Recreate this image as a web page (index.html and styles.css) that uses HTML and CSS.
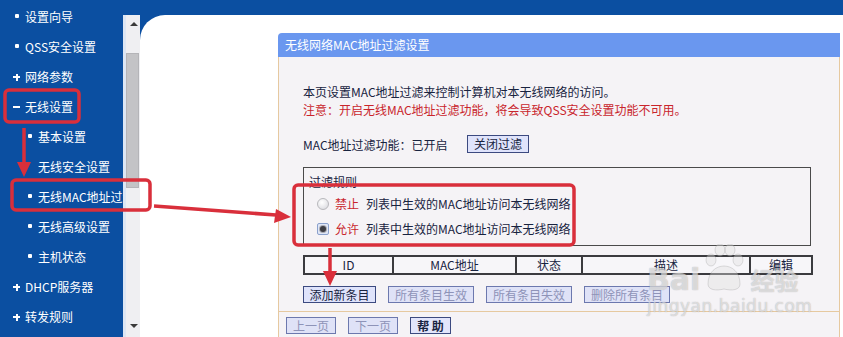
FILE: index.html
```html
<!DOCTYPE html>
<html lang="zh-CN">
<head>
<meta charset="utf-8">
<title>无线网络MAC地址过滤设置</title>
<link rel="stylesheet" href="styles.css">
</head>
<body>
<div class="frame">
  <nav class="sidebar">
    <div class="nav-item"><span class="b-dot"></span>设置向导</div>
    <div class="nav-item"><span class="b-dot"></span>QSS安全设置</div>
    <div class="nav-item"><span class="b-plus"></span>网络参数</div>
    <div class="nav-item"><span class="b-minus"></span>无线设置</div>
    <div class="nav-item sub"><span class="b-dot"></span>基本设置</div>
    <div class="nav-item sub"><span class="b-none"></span>无线安全设置</div>
    <div class="nav-item sub"><span class="b-dot"></span>无线MAC地址过滤</div>
    <div class="nav-item sub"><span class="b-dot"></span>无线高级设置</div>
    <div class="nav-item sub"><span class="b-dot"></span>主机状态</div>
    <div class="nav-item"><span class="b-plus"></span>DHCP服务器</div>
    <div class="nav-item"><span class="b-plus"></span>转发规则</div>
  </nav>
  <div class="scroll-col">
    <div class="scroll-track">
      <div class="arrow-up"></div>
      <div class="thumb"></div>
      <div class="arrow-down"></div>
    </div>
  </div>
  <main class="main">
    <div class="canvas">
      <section class="panel">
        <div class="panel-head">无线网络MAC地址过滤设置</div>
        <div class="panel-body">
          <p class="line">本页设置MAC地址过滤来控制计算机对本无线网络的访问。</p>
          <p class="line warn">注意：开启无线MAC地址过滤功能，将会导致QSS安全设置功能不可用。</p>
          <div class="status-row">
            <span class="status-text">MAC地址过滤功能：已开启</span>
            <button class="btn btn-on">关闭过滤</button>
          </div>
          <div class="rules">
            <div class="rules-title">过滤规则</div>
            <label class="radio-row"><span class="radio"></span><span class="red">禁止</span>列表中生效的MAC地址访问本无线网络</label>
            <label class="radio-row"><span class="radio checked"></span><span class="red">允许</span>列表中生效的MAC地址访问本无线网络</label>
          </div>
          <table class="list">
            <tr>
              <th class="c-id">ID</th>
              <th class="c-mac">MAC地址</th>
              <th class="c-st">状态</th>
              <th class="c-desc">描述</th>
              <th class="c-edit">编辑</th>
            </tr>
          </table>
          <div class="btn-row">
            <button class="btn btn-on">添加新条目</button>
            <button class="btn btn-off">所有条目生效</button>
            <button class="btn btn-off">所有条目失效</button>
            <button class="btn btn-off">删除所有条目</button>
          </div>
        </div>
        <div class="panel-foot">
          <button class="btn btn-off">上一页</button>
          <button class="btn btn-off">下一页</button>
          <button class="btn btn-help">帮 助</button>
        </div>
      </section>
    </div>
  </main>
</div>

<div class="watermark">
  <div class="wm-top">
    <span class="wm-bai">Bai</span>
    <svg class="wm-paw" width="44" height="50" viewBox="0 0 44 50">
      <ellipse cx="9" cy="16" rx="5" ry="6"/>
      <ellipse cx="18" cy="6" rx="5" ry="6"/>
      <ellipse cx="28" cy="6" rx="5" ry="6"/>
      <ellipse cx="36" cy="16" rx="5" ry="6"/>
      <path d="M6 40 C6 28 14 22 22 22 C30 22 38 28 38 40 C38 46 30 47 22 45 C14 47 6 46 6 40 Z"/>
    </svg>
    <span class="wm-jy">经验</span>
  </div>
  <div class="wm-url">jingyan.baidu.com</div>
</div>

<svg class="marks" width="843" height="337" viewBox="0 0 843 337">
  <g fill="none" stroke="#d92f3b" stroke-width="3.5">
    <rect x="5" y="90" width="74" height="32" rx="4"/>
    <rect x="12" y="180" width="138" height="30" rx="4"/>
    <rect x="294" y="185" width="280" height="60" rx="4"/>
    <line x1="24" y1="128" x2="24" y2="164"/>
    <line x1="154" y1="206" x2="276" y2="215"/>
    <line x1="330" y1="248" x2="330" y2="273"/>
  </g>
  <g fill="#d92f3b">
    <polygon points="24,177 17,162 31,162"/>
    <polygon points="291,217 274,223 276,209"/>
    <polygon points="330,286 323,271 337,271"/>
  </g>
</svg>
</body>
</html>
```

FILE: styles.css
```css
* { box-sizing: border-box; }

html, body {
  margin: 0;
  padding: 0;
}

body {
  width: 843px;
  height: 337px;
  overflow: hidden;
  position: relative;
  background: #ffffff;
  font-family: "Noto Sans CJK SC", "DejaVu Sans", sans-serif;
  font-size: 12px;
  color: #18233f;
}

.frame {
  display: flex;
  height: 337px;
}

/* ---------- sidebar ---------- */
.sidebar {
  width: 123px;
  flex: none;
  background: #0b4fa1;
  color: #ffffff;
  padding-top: 2px;
  overflow: hidden;
  white-space: nowrap;
}

.nav-item {
  display: flex;
  align-items: center;
  height: 30px;
  padding-left: 13px;
  font-size: 12px;
  line-height: 1;
}

.nav-item.sub {
  padding-left: 26px;
}

.nav-item > span {
  width: 8px;
  height: 8px;
  margin-right: 4px;
  flex: none;
  position: relative;
}

.b-dot::after {
  content: "";
  position: absolute;
  left: 2px;
  top: 1px;
  width: 4px;
  height: 4px;
  background: #ffffff;
  border-radius: 1px;
}

.b-plus::before,
.b-plus::after,
.b-minus::before {
  content: "";
  position: absolute;
  background: #ffffff;
}

.b-plus::before,
.b-minus::before {
  left: 0;
  top: 3px;
  width: 7px;
  height: 2px;
}

.b-plus::after {
  left: 2.5px;
  top: 0.5px;
  width: 2px;
  height: 7px;
}

/* ---------- scrollbar ---------- */
.scroll-col {
  width: 17px;
  flex: none;
  background: #0b4fa1;
  padding-top: 15px;
}

.scroll-track {
  height: 322px;
  background: #efeff2;
  border-left: 3px solid #dde6f4;
  position: relative;
}

.arrow-up {
  position: absolute;
  left: 4px;
  top: 7px;
  width: 0;
  height: 0;
  border-left: 4px solid transparent;
  border-right: 4px solid transparent;
  border-bottom: 4px solid #3a3a3a;
}

.thumb {
  position: absolute;
  left: 0;
  top: 38px;
  width: 13px;
  height: 135px;
  background: #c3c3c6;
  border: 1px solid #b4b4b8;
}

.arrow-down {
  position: absolute;
  left: 4px;
  top: 309px;
  width: 0;
  height: 0;
  border-left: 4px solid transparent;
  border-right: 4px solid transparent;
  border-top: 4px solid #3a3a3a;
}

/* ---------- main ---------- */
.main {
  flex: 1;
  background: #0b4fa1;
  padding-top: 15px;
}

.canvas {
  background: #ffffff;
  height: 322px;
  border-top-left-radius: 25px;
  padding: 18px 0 0 138px;
  overflow: hidden;
}

.panel {
  width: 562px;
}

.panel-head {
  height: 24px;
  line-height: 24px;
  background: #6a97ef;
  color: #ffffff;
  padding-left: 7px;
  font-size: 12px;
  border-top-left-radius: 4px;
}

.panel-body {
  background: #f5f3f6;
  border-left: 1px solid #e6c9a0;
  border-right: 1px solid #e6c9a0;
  padding: 26px 0 8px 24px;
}

.line {
  margin: 0;
  height: 18px;
  line-height: 18px;
  white-space: nowrap;
}

.warn {
  color: #c9252c;
}

.status-row {
  display: flex;
  align-items: center;
  margin-top: 16px;
  height: 18px;
}

.status-text {
  width: 164px;
}

.btn {
  font-family: "Noto Sans CJK SC", "DejaVu Sans", sans-serif;
  font-size: 12px;
  line-height: 1;
  padding: 0 4px;
  height: 17px;
  border-radius: 0;
  cursor: default;
}

.btn-on {
  background: #dfe3fb;
  color: #18233f;
  border: 1px solid #3c4a80;
}

.status-row .btn {
  height: 18px;
  width: 62px;
}

.btn-off {
  background: #dfe2f7;
  color: #8e93b8;
  border: 1px solid #6c78ae;
}

.btn-help {
  background: #e2e5fb;
  color: #18233f;
  border: 1px solid #3c4a80;
  font-weight: bold;
}

/* ---------- rules box ---------- */
.rules {
  margin-top: 14px;
  width: 508px;
  border: 1px solid #4a4a4a;
  padding: 5px 0 4px 5px;
}

.rules-title {
  height: 18px;
  line-height: 18px;
}

.radio-row {
  display: flex;
  align-items: center;
  height: 25px;
  padding-left: 8px;
  white-space: nowrap;
}

.radio {
  width: 12px;
  height: 12px;
  border-radius: 50%;
  border: 1px solid #b8b8bc;
  background: radial-gradient(circle at 40% 35%, #ffffff 0%, #e2e2e6 70%, #cfcfd4 100%);
  margin-right: 6px;
  flex: none;
  position: relative;
}

.radio.checked {
  border-radius: 2px;
  border: 1px solid #8aa0cc;
  background: #dfe6f6;
}

.radio.checked::after {
  content: "";
  position: absolute;
  left: 2px;
  top: 2px;
  width: 6px;
  height: 6px;
  border-radius: 50%;
  background: #3c3c42;
  box-shadow: 0 0 0 1px #a8a8b0;
}

.red {
  color: #c9252c;
  margin-right: 7px;
}

/* ---------- list table ---------- */
.list {
  margin-top: 9px;
  width: 508px;
  border-collapse: collapse;
  border: 2px solid #3b3b3f;
  table-layout: fixed;
}

.list th {
  height: 18px;
  border: 2px solid #3b3b3f;
  font-weight: normal;
  font-size: 12px;
  line-height: 14px;
  padding: 0;
  background: #f7f6f9;
  color: #18233f;
}

.c-id { width: 89px; }
.c-mac { width: 123px; }
.c-st { width: 66px; }
.c-desc { width: 168px; }
.c-edit { width: 62px; }

.btn-row {
  display: flex;
  gap: 12px;
  margin-top: 11px;
}

.btn-row .btn:nth-child(1) { width: 73px; }
.btn-row .btn:nth-child(2) { width: 86px; }
.btn-row .btn:nth-child(3) { width: 86px; }
.btn-row .btn:nth-child(4) { width: 86px; }

.panel-foot {
  background: #f5f3f6;
  border-top: 1px solid #e6c9a0;
  border-left: 1px solid #e6c9a0;
  border-right: 1px solid #e6c9a0;
  padding: 5px 0 8px 7px;
  display: flex;
  gap: 12px;
}

.panel-foot .btn:nth-child(1),
.panel-foot .btn:nth-child(2) { width: 50px; }
.panel-foot .btn:nth-child(3) { width: 41px; }

/* ---------- overlays ---------- */
.watermark {
  position: absolute;
  left: 647px;
  top: 244px;
  color: rgba(255, 255, 255, 0.5);
  text-shadow: 0 0 1px rgba(130, 130, 130, 0.35), 0 0 1px rgba(130, 130, 130, 0.35);
  pointer-events: none;
  font-family: "DejaVu Sans", sans-serif;
}

.wm-top {
  display: flex;
  align-items: flex-end;
  height: 50px;
}

.wm-bai {
  font-size: 30px;
  font-weight: bold;
  line-height: 28px;
}

.wm-paw {
  fill: rgba(225, 225, 225, 0.4);
  stroke: rgba(150, 150, 150, 0.3);
  stroke-width: 1;
  margin: 0 4px 0 2px;
}

.wm-jy {
  font-family: "Noto Sans CJK SC", sans-serif;
  font-size: 24px;
  font-weight: bold;
  line-height: 28px;
}

.wm-url {
  font-size: 17px;
  line-height: 24px;
  letter-spacing: 0.5px;
}

.marks {
  position: absolute;
  left: 0;
  top: 0;
  pointer-events: none;
}
```
